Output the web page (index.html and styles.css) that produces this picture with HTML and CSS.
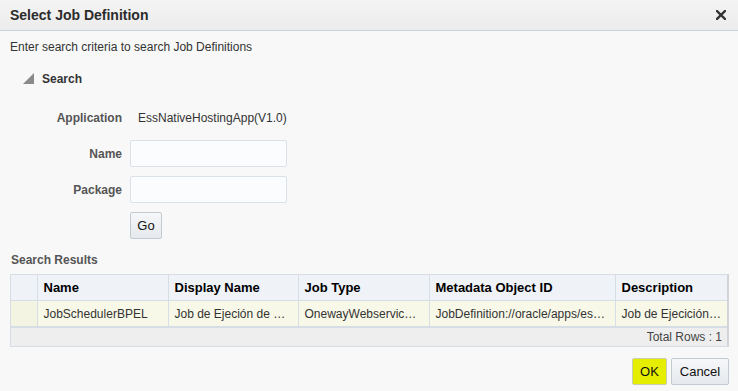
FILE: index.html
```html
<!DOCTYPE html>
<html>
<head>
<meta charset="utf-8">
<link rel="stylesheet" href="styles.css">
</head>
<body>
<div class="dialog">
  <div class="titlebar">
    <span class="title">Select Job Definition</span>
    <svg class="close" width="10" height="10" viewBox="0 0 10 10"><path d="M1 1L9 9M9 1L1 9" stroke="#333" stroke-width="2.4" stroke-linecap="square"/></svg>
  </div>
  <div class="content">
    <div class="intro">Enter search criteria to search Job Definitions</div>
    <div class="section-head">
      <svg class="disclose" width="11" height="11" viewBox="0 0 11 11"><polygon points="11,0 11,11 0,11" fill="#8a8a8a"/></svg>
      <span>Search</span>
    </div>
    <div class="form">
      <div class="label app-label">Application</div>
      <div class="value app-value">EssNativeHostingApp(V1.0)</div>
      <div class="label">Name</div>
      <div class="value"><input class="field" type="text"></div>
      <div class="label">Package</div>
      <div class="value"><input class="field" type="text"></div>
      <div class="label"></div>
      <div class="value"><button class="btn go">Go</button></div>
    </div>
    <div class="results-title">Search Results</div>
    <div class="grid">
      <table>
        <colgroup>
          <col class="c0"><col class="c1"><col class="c2"><col class="c3"><col class="c4"><col class="c5">
        </colgroup>
        <thead>
          <tr><th></th><th>Name</th><th>Display Name</th><th>Job Type</th><th>Metadata Object ID</th><th>Description</th></tr>
        </thead>
        <tbody>
          <tr><td></td><td>JobSchedulerBPEL</td><td>Job de Ejeción de BPEL</td><td>OnewayWebserviceJobType</td><td>JobDefinition://oracle/apps/ess/custom</td><td>Job de Ejecición de BPEL</td></tr>
        </tbody>
      </table>
      <div class="grid-footer">Total Rows : 1</div>
    </div>
    <div class="actions">
      <button class="btn ok">OK</button>
      <button class="btn cancel">Cancel</button>
    </div>
  </div>
</div>
</body>
</html>
```

FILE: styles.css
```css
html, body {
  margin: 0;
  padding: 0;
}
body {
  width: 738px;
  height: 391px;
  overflow: hidden;
  background: #f8f8f8;
  font-family: "Liberation Sans", Arial, sans-serif;
  font-size: 12px;
  color: #333;
}
.dialog {
  display: flex;
  flex-direction: column;
  height: 391px;
}
.titlebar {
  height: 30px;
  border-bottom: 1px solid #c8d1da;
  background: linear-gradient(#f4f4f4, #ececec);
  display: flex;
  align-items: center;
  justify-content: space-between;
  padding: 0 12px 0 10px;
}
.title {
  font-size: 14px;
  font-weight: bold;
  color: #2b2b2b;
}
.close {
  display: block;
}
.content {
  padding: 8px 9px 0 10px;
  display: flex;
  flex-direction: column;
}
.intro {
  line-height: 16px;
  color: #333;
}
.section-head {
  margin-top: 16px;
  height: 16px;
  display: flex;
  align-items: center;
  padding-left: 13px;
  gap: 8px;
  font-weight: bold;
  color: #333;
}
.disclose {
  display: block;
  margin-top: -2px;
}
.form {
  margin-top: 22px;
  display: grid;
  grid-template-columns: 112px 160px;
  column-gap: 8px;
  row-gap: 9px;
  align-items: center;
}
.label {
  text-align: right;
  font-weight: bold;
  color: #555;
}
.app-label, .app-value {
  line-height: 18px;
  margin-bottom: 4px;
}
.app-value {
  padding-left: 8px;
  color: #333;
}
.field {
  display: block;
  box-sizing: border-box;
  width: 157px;
  height: 27px;
  margin: 0;
  border: 1px solid #dbe1e8;
  border-radius: 2px;
  background: #fbfcfd;
}
.btn {
  box-sizing: border-box;
  height: 27px;
  margin: 0;
  padding: 0 7px;
  border: 1px solid #c3cad2;
  border-radius: 2px;
  background: linear-gradient(#f5f7f9, #e6e9ed);
  font-family: "Liberation Sans", Arial, sans-serif;
  font-size: 13px;
  color: #111;
}
.go {
  width: 32px;
  padding: 0;
}
.results-title {
  margin-top: 13px;
  line-height: 16px;
  font-weight: bold;
  color: #555;
  padding-left: 1px;
}
.grid {
  margin-top: 6px;
  width: 719px;
  box-sizing: border-box;
  border: 1px solid #d6dde4;
  border-right: 2px solid #d0d4d8;
}
table {
  width: 716px;
  border-collapse: collapse;
  table-layout: fixed;
}
.c0 { width: 26px; }
.c1 { width: 131px; }
.c2 { width: 130px; }
.c3 { width: 131px; }
.c4 { width: 186px; }
.c5 { width: 112px; }
th, td {
  padding: 0 6px;
  white-space: nowrap;
  overflow: hidden;
  text-overflow: ellipsis;
  text-align: left;
  border-left: 1px solid #d6dde4;
}
th:first-child, td:first-child {
  border-left: none;
}
th {
  height: 25px;
  background: #eff2f7;
  font-size: 13px;
  font-weight: bold;
  color: #000;
  border-bottom: 1px solid #d6dde4;
}
td {
  height: 25px;
  background: #f8f8e8;
  color: #333;
  border-bottom: 2px solid #d6dde4;
}
td:first-child {
  background: #f4f4e2;
}
.grid-footer {
  height: 18px;
  line-height: 18px;
  background: #eeeeee;
  text-align: right;
  padding-right: 5px;
  color: #444;
}
.actions {
  margin-top: 11px;
  display: flex;
  justify-content: flex-end;
  gap: 4px;
}
.ok {
  width: 35px;
  padding: 0;
  background: #e6ee00;
  border-color: #c9cdb0;
}
.cancel {
  width: 58px;
  padding: 0;
}
```
